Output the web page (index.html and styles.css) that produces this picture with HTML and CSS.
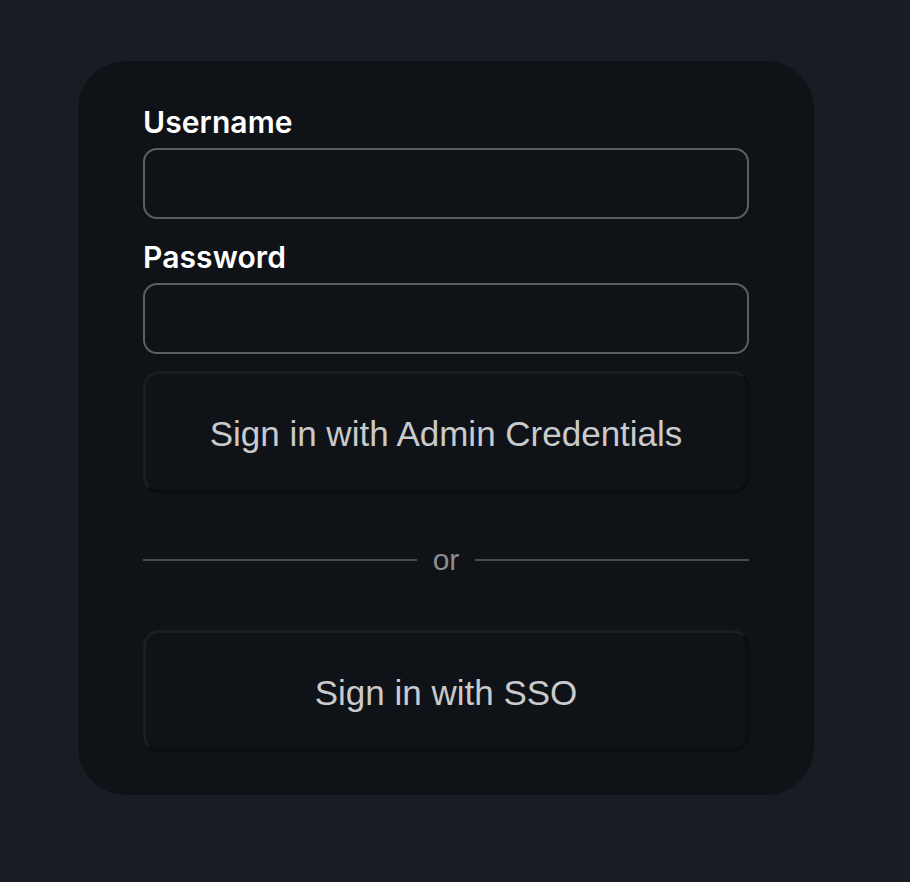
FILE: index.html
```html
<!DOCTYPE html>
<html lang="en">
<head>
<meta charset="utf-8">
<title>Sign in</title>
<link rel="stylesheet" href="styles.css">
</head>
<body>
  <main class="card">
    <form class="form">
      <label class="label" for="username">Username</label>
      <input class="input" id="username" type="text">
      <label class="label label-second" for="password">Password</label>
      <input class="input" id="password" type="password">
      <button class="btn btn-first" type="button">Sign in with Admin Credentials</button>
      <div class="divider">
        <span class="line"></span>
        <span class="or">or</span>
        <span class="line"></span>
      </div>
      <button class="btn" type="button">Sign in with SSO</button>
    </form>
  </main>
</body>
</html>
```

FILE: styles.css
```css
html, body {
  margin: 0;
  padding: 0;
  background: #191c23;
}

body {
  padding: 61px 0 0 78px;
  font-family: Inter, "Noto Sans", sans-serif;
}

.card {
  box-sizing: border-box;
  width: 736px;
  height: 734px;
  padding: 43px 65px 43px 65px;
  background: #0f1216;
  border-radius: 48px;
}

.form {
  display: flex;
  flex-direction: column;
}

.label {
  color: #ffffff;
  font-size: 30px;
  font-weight: 600;
  line-height: 36px;
  letter-spacing: 0.1px;
  margin-bottom: 8px;
}

.label-second {
  margin-top: 20px;
}

.input {
  box-sizing: border-box;
  height: 71px;
  width: 100%;
  margin: 0;
  background: transparent;
  border: 2px solid #5b5e63;
  border-radius: 14px;
  outline: none;
}

.btn {
  box-sizing: border-box;
  width: 100%;
  height: 122px;
  margin: 0;
  padding: 4px 0 0;
  background: #0f1216;
  border-style: solid;
  border-width: 3px;
  border-color: #1a1d22 #0b0d10 #0b0d10 #1a1d22;
  border-radius: 16px;
  color: #c9cacc;
  font-family: "Liberation Sans", Arial, sans-serif;
  font-size: 35px;
}

.btn-first {
  margin-top: 17px;
}

.divider {
  display: flex;
  align-items: center;
  gap: 16px;
  height: 36px;
  margin: 49px 0 52px;
}

.line {
  flex: 1;
  height: 2px;
  background: #494b50;
}

.or {
  color: #8b8d90;
  font-family: "Liberation Sans", Arial, sans-serif;
  font-size: 30px;
  line-height: 36px;
}
```
